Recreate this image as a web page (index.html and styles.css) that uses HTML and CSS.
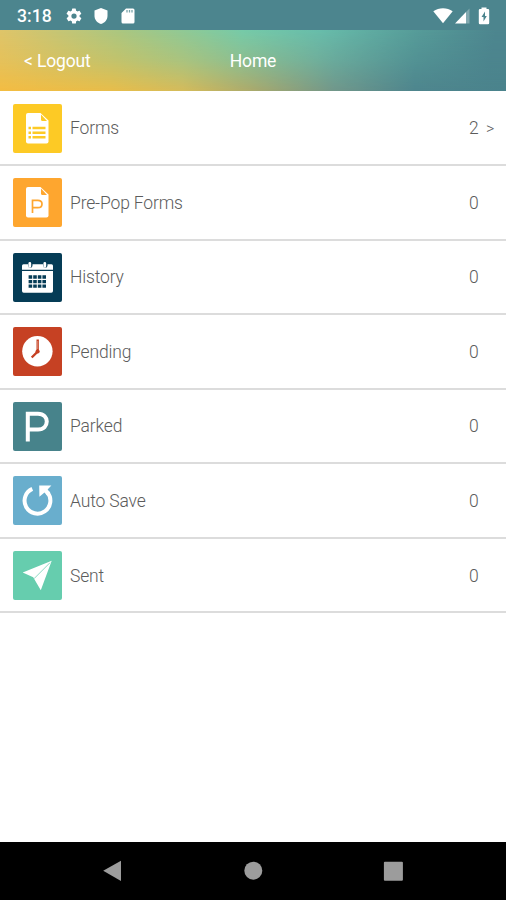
FILE: index.html
```html
<!DOCTYPE html>
<html lang="en">
<head>
<meta charset="utf-8">
<title>Home</title>
<link rel="stylesheet" href="styles.css">
</head>
<body>
<div class="status">
  <span class="time">3:18</span>
  <svg class="gear" width="18" height="18" viewBox="0 0 24 24"><path fill="#fff" d="M19.4 13a7.800 7.800 0 0 0 0-2l2.100-1.600a.5.5 0 0 0 .1-.7l-2-3.400a.5.5 0 0 0-.6-.2l-2.500 1a7.500 7.500 0 0 0-1.700-1l-.4-2.600a.5.5 0 0 0-.5-.5h-4a.5.5 0 0 0-.5.5L9 5.100a7.500 7.500 0 0 0-1.700 1l-2.500-1a.5.5 0 0 0-.6.2l-2 3.400a.5.5 0 0 0 .1.700L4.500 11a7.800 7.800 0 0 0 0 2l-2.100 1.600a.5.5 0 0 0-.1.700l2 3.400c.1.200.4.300.6.200l2.500-1a7.500 7.500 0 0 0 1.700 1l.4 2.600c0 .3.200.5.5.5h4c.3 0 .5-.2.5-.5l.4-2.600a7.500 7.500 0 0 0 1.700-1l2.500 1c.2.100.5 0 .6-.2l2-3.400a.5.5 0 0 0-.1-.7zM12 15.500a3.500 3.500 0 1 1 0-7 3.500 3.500 0 0 1 0 7z"/></svg>
  <svg class="shield" width="14" height="16" viewBox="0 0 14 16"><path fill="#fff" d="M7 0l6.500 2.500V8c0 3.700-2.700 6.900-6.500 8C3.200 14.900.5 11.700.5 8V2.500z"/></svg>
  <svg class="card" width="14" height="16" viewBox="0 0 14 16"><path fill="#fff" d="M5 .5h7A1.500 1.500 0 0 1 13.500 2v12a1.500 1.500 0 0 1-1.500 1.500H2A1.500 1.500 0 0 1 .5 14V5z"/><path stroke="#4c858e" stroke-width="1.300" stroke-opacity=".75" d="M6 2v2.500M8.500 2v2.500M11 2v2.500"/></svg>
  <span class="spacer"></span>
  <svg width="20" height="16" viewBox="0 0 20 16"><path fill="#fff" d="M.3 3.200C6-.9 14-.9 19.700 3.200L10 15.200z"/></svg>
  <svg class="signal" width="15" height="16" viewBox="0 0 15 16"><path fill="#fff" d="M0 15.500L11 4v11.500z"/><path fill="#fff" fill-opacity=".3" d="M11 4l3.500-3.500v15H11z"/></svg>
  <svg class="battery" width="12" height="18" viewBox="0 0 12 18"><path fill="#fff" d="M3.500 2V.5h5V2H10a1.200 1.200 0 0 1 1.200 1.200V16a1.200 1.200 0 0 1-1.200 1.200H2A1.200 1.200 0 0 1 .8 16V3.200A1.200 1.200 0 0 1 2 2z"/><path fill="#4c858e" d="M7 4.500L3.500 10h2v4.500L8.800 9H7z"/></svg>
</div>
<header class="bar">
  <span class="back">&lt; Logout</span>
  <span class="title">Home</span>
</header>
<main class="list">
  <div class="row">
    <svg class="icon forms" viewBox="0 0 49 49"><path fill="#fff" d="M15 9h12.500l8 7.500V37.500a2 2 0 0 1-2 2H15a2 2 0 0 1-2-2V11a2 2 0 0 1 2-2z"/><path fill="#fdca25" d="M28 10.500l6 6.500h-4.500a1.500 1.500 0 0 1-1.500-1.500z"/><path stroke="#fdca25" stroke-width="2.400" d="M15.500 24h2.500M19.500 24h13M15.500 28.700h2.500M19.500 28.700h13M15.500 33.300h2.500M19.500 33.300h13"/></svg>
    <span class="label">Forms</span><span class="count">2</span><span class="more">&gt;</span>
  </div>
  <div class="row">
    <svg class="icon prepop" viewBox="0 0 49 49"><path fill="#fff" d="M15 9h12.500l8 7.500V37.500a2 2 0 0 1-2 2H15a2 2 0 0 1-2-2V11a2 2 0 0 1 2-2z"/><path fill="#fea62f" d="M28 10.500l6 6.500h-4.500a1.500 1.500 0 0 1-1.500-1.500z"/><path fill="none" stroke="#fea62f" stroke-width="1.700" d="M19.500 35V22.300h5.300c5.600 0 5.600 7.400 0 7.400h-5.300"/></svg>
    <span class="label">Pre-Pop Forms</span><span class="count">0</span><span class="more"></span>
  </div>
  <div class="row">
    <svg class="icon history" viewBox="0 0 49 49"><path fill="#fff" d="M10.500 11.300h28a1.500 1.500 0 0 1 1.500 1.500v4H9v-4a1.500 1.500 0 0 1 1.500-1.500zM9 17.900h31V38a1.700 1.700 0 0 1-1.700 1.700H10.700A1.700 1.700 0 0 1 9 38z"/><path stroke="#053c56" stroke-width="4.400" stroke-linecap="round" d="M17.300 11v1.500M32.300 11v1.500"/><path stroke="#fff" stroke-width="2.800" stroke-linecap="round" d="M16.800 10.400v3M31.800 10.400v3"/><path stroke="#053c56" stroke-width="3.300" stroke-dasharray="3.600 1" d="M15.600 24h17.400M15.600 28.600h17.400M15.600 33.100h17.400"/></svg>
    <span class="label">History</span><span class="count">0</span><span class="more"></span>
  </div>
  <div class="row">
    <svg class="icon pending" viewBox="0 0 49 49"><circle cx="24.400" cy="24.200" r="15.200" fill="#fff"/><path fill="none" stroke="#c64123" stroke-width="2.400" d="M24.700 12.500v12l-6 6"/><circle cx="24.600" cy="24.500" r="2.100" fill="#c64123"/><path stroke="#fff" stroke-width=".6" opacity=".6" d="M24.700 14v8"/></svg>
    <span class="label">Pending</span><span class="count">0</span><span class="more"></span>
  </div>
  <div class="row">
    <svg class="icon parked" viewBox="0 0 49 49"><path fill="none" stroke="#fff" stroke-width="4" d="M14.800 39.500V11.700h10.200c11.700 0 11.700 15.800 0 15.800H14.800"/></svg>
    <span class="label">Parked</span><span class="count">0</span><span class="more"></span>
  </div>
  <div class="row">
    <svg class="icon autosave" viewBox="0 0 49 49"><path fill="none" stroke="#fff" stroke-width="4" d="M19.300 12.900A12.900 12.900 0 1 0 34.500 16.600"/><path fill="#fff" d="M26.200 9.500H38.400L34.600 13.500 37.300 16.700 34 19.500 31.500 16.400 26.400 20.800z"/></svg>
    <span class="label">Auto Save</span><span class="count">0</span><span class="more"></span>
  </div>
  <div class="row">
    <svg class="icon sent" viewBox="0 0 49 49"><path fill="#fff" d="M38.700 9.700L9.700 21.500l10.500 4.800 7.600 13z"/><path fill="none" stroke="#66cdae" stroke-width="1" opacity=".75" d="M37 11.700L21 27.700"/></svg>
    <span class="label">Sent</span><span class="count">0</span><span class="more"></span>
  </div>
</main>
<nav class="nav">
  <svg width="20" height="22" viewBox="0 0 20 22"><path fill="#9c9c9c" d="M.2 10.700L18 .7v20.300z"/></svg>
  <svg width="20" height="22" viewBox="0 0 20 22"><circle cx="10.300" cy="10.700" r="9" fill="#9c9c9c"/></svg>
  <svg width="20" height="22" viewBox="0 0 20 22"><rect x=".9" y="1.700" width="19" height="19" rx="1" fill="#9c9c9c"/></svg>
</nav>
</body>
</html>
```
FILE: styles.css
```css
* { box-sizing: border-box; }
body {
  margin: 0;
  height: 900px;
  display: flex;
  flex-direction: column;
  overflow: hidden;
  background: #fff;
  font-family: Roboto, "Liberation Sans", sans-serif;
}
svg { display: block; flex: none; }
.status {
  flex: none;
  height: 30px;
  display: flex;
  align-items: center;
  padding: 1px 16px 0 17px;
  background: #4c858e;
  color: #fff;
}
.time { width: 48px; font-size: 17.600px; font-weight: 500; line-height: 30px; }
.shield { margin-left: 11px; }
.card { margin-left: 13px; }
.spacer { flex: 1; }
.signal { margin-left: 2px; }
.battery { margin-left: 8px; }
.bar {
  flex: none;
  height: 61px;
  display: grid;
  grid-template-columns: 1fr auto 1fr;
  align-items: center;
  padding: 1px 24px 0;
  color: #fff;
  font-size: 17.500px;
  letter-spacing: -.15px;
  background: linear-gradient(100deg, #dfc56a 0, #a9c782 24%, #76cba9 47%, #68bdab 62%, #559a98 82%, #4d868f 96%);
  position: relative;
}
.bar::before {
  content: "";
  position: absolute;
  inset: 0;
  background: linear-gradient(90deg, #f3bc42 0, #e8bd4a 22%, #d5bb5a 36%, #aaa96c 50%, #71978a 66%, #4e858d 82%, #4a838c 100%);
  -webkit-mask-image: linear-gradient(180deg, transparent, rgba(0, 0, 0, .4) 50%, #000);
  mask-image: linear-gradient(180deg, transparent, rgba(0, 0, 0, .4) 50%, #000);
}
.back, .title { position: relative; }
.list { flex: 1; padding-top: .4px; }
.row {
  height: 74.570px;
  display: flex;
  align-items: center;
  padding: 1px 2px 0 13px;
  border-bottom: 2px solid #dcdcdc;
  color: #5c5c5c;
  font-size: 17.500px;
  font-weight: 300;
  letter-spacing: -.15px;
}
.icon { width: 49px; height: 49px; border-radius: 2px; }
.label { flex: 1; margin-left: 8px; }
.count { width: 10px; }
.more { width: 18px; margin-left: 7px; font-size: 16px; }
.forms { background: #fdca25; }
.prepop { background: #fea62f; }
.history { background: #053c56; }
.pending { background: #c64123; }
.parked { background: #47838b; }
.autosave { background: #69aecd; }
.sent { background: #66cdae; }
.nav {
  flex: none;
  height: 58.500px;
  display: flex;
  justify-content: space-between;
  padding: 18px 103px 0;
  background: #000;
}
```
